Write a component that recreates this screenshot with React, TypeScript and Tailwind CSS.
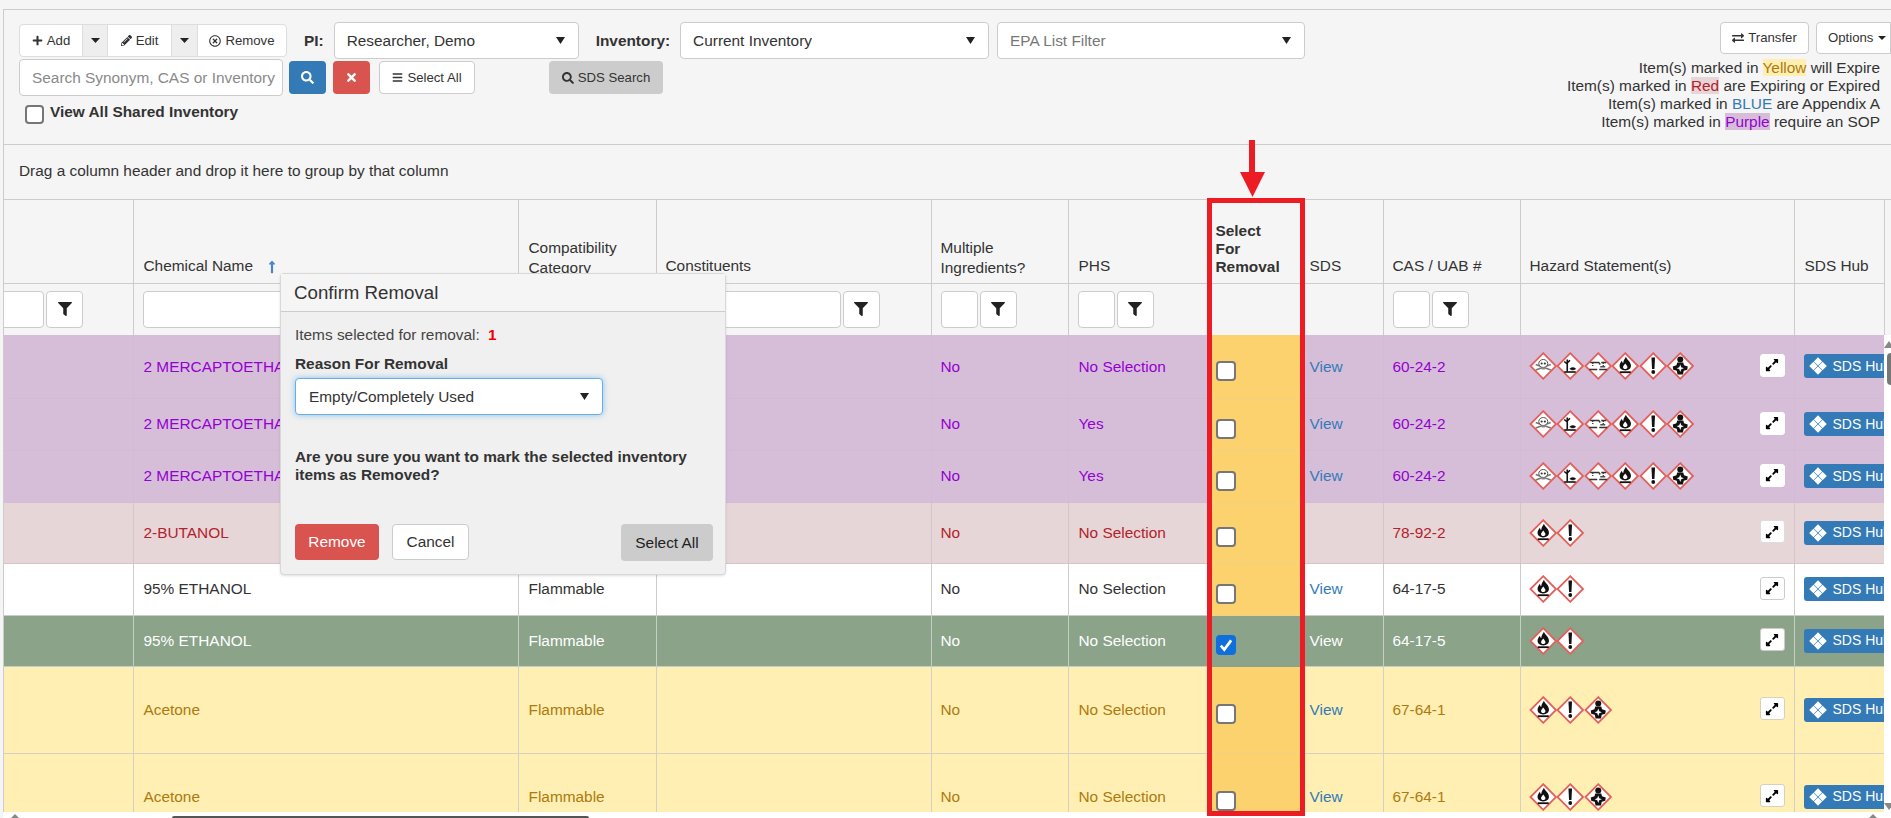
import { FaBars, FaExchangeAlt, FaExpandAlt, FaFilter, FaLongArrowAltUp, FaPencilAlt, FaPlus, FaRegTimesCircle, FaSearch, FaTimes } from "react-icons/fa";

type Ghs = "skull" | "env" | "corr" | "flame" | "excl" | "health";

interface RowData {
  h: string;
  name: string;
  compat: string;
  multi: string;
  phs: string;
  sds: boolean;
  cas: string;
  ghs: Ghs[];
  theme: "purple" | "red" | "white" | "green" | "yellow";
}

const allSix: Ghs[] = ["skull", "env", "corr", "flame", "excl", "health"];

const rows: RowData[] = [
  { h: "h-[63px]", name: "2 MERCAPTOETHANOL", compat: "", multi: "No", phs: "No Selection", sds: true, cas: "60-24-2", ghs: allSix, theme: "purple" },
  { h: "h-[52px]", name: "2 MERCAPTOETHANOL", compat: "", multi: "No", phs: "Yes", sds: true, cas: "60-24-2", ghs: allSix, theme: "purple" },
  { h: "h-[52px]", name: "2 MERCAPTOETHANOL", compat: "", multi: "No", phs: "Yes", sds: true, cas: "60-24-2", ghs: allSix, theme: "purple" },
  { h: "h-[61px]", name: "2-BUTANOL", compat: "", multi: "No", phs: "No Selection", sds: false, cas: "78-92-2", ghs: ["flame", "excl"], theme: "red" },
  { h: "h-[52px]", name: "95% ETHANOL", compat: "Flammable", multi: "No", phs: "No Selection", sds: true, cas: "64-17-5", ghs: ["flame", "excl"], theme: "white" },
  { h: "h-[51px]", name: "95% ETHANOL", compat: "Flammable", multi: "No", phs: "No Selection", sds: true, cas: "64-17-5", ghs: ["flame", "excl"], theme: "green" },
  { h: "h-[87px]", name: "Acetone", compat: "Flammable", multi: "No", phs: "No Selection", sds: true, cas: "67-64-1", ghs: ["flame", "excl", "health"], theme: "yellow" },
  { h: "h-[87px]", name: "Acetone", compat: "Flammable", multi: "No", phs: "No Selection", sds: true, cas: "67-64-1", ghs: ["flame", "excl", "health"], theme: "yellow" },
];

const themes = {
  purple: { row: "bg-[#d7bed8] text-[#9400d3]", cell: "border-[#d2bbd3]", sel: "bg-[#fbd26e] border-[#f0cf86]", link: "text-[#337ab7]", expand: "border-white" },
  red: { row: "bg-[#e7d6d7] text-[#b2222c]", cell: "border-[#d2c6c8]", sel: "bg-[#fbd26e] border-[#f0cf86]", link: "text-[#337ab7]", expand: "border-[#dddddd]" },
  white: { row: "bg-white text-[#333333]", cell: "border-[#cccccc]", sel: "bg-[#fbd26e] border-[#f0cf86]", link: "text-[#337ab7]", expand: "border-[#cccccc]" },
  green: { row: "bg-[#8aa389] text-white", cell: "border-[#c4cfc4]", sel: "bg-[#8aa389] border-[#8aa389]", link: "text-white", expand: "border-[#cccccc]" },
  yellow: { row: "bg-[#ffefb2] text-[#ad7a0f]", cell: "border-[#d4d0c4]", sel: "bg-[#fbd26e] border-[#f0cf86]", link: "text-[#337ab7]", expand: "border-[#d8d0b8]" },
};

function Caret({ className }: { className: string }) {
  return (
    <svg viewBox="0 0 10 8" preserveAspectRatio="none" className={className}>
      <path d="M0 0h10L5 8z" fill="#222222" />
    </svg>
  );
}

function SelectBox({ value, className, muted }: { value: string; className: string; muted?: boolean }) {
  return (
    <div className={`flex h-[37px] items-center justify-between rounded border border-[#cccccc] bg-white pr-[13px] pl-3 ${muted ? "text-[#777777]" : "text-[#333333]"} ${className}`}>
      <span>{value}</span>
      <Caret className="h-[7px] w-[9px]" />
    </div>
  );
}

function GhsIcon({ type }: { type: Ghs }) {
  return (
    <svg viewBox="0 0 28 28" className="-mr-px h-7 w-[28.5px] shrink-0">
      <polygon points="14,1.2 26.8,14 14,26.8 1.2,14" fill="#ffffff" stroke="#e2605b" strokeWidth="1.8" />
      {type === "skull" && (
        <g>
          <path d="M6.500 18l15-5.500M6.500 12.500l15 5.500" stroke="#777777" strokeWidth="1.500" />
          <ellipse cx="14" cy="11.500" rx="4.500" ry="4" fill="#ffffff" stroke="#555555" strokeWidth="1" />
          <circle cx="12.400" cy="11.500" r="1.100" fill="#333333" />
          <circle cx="15.600" cy="11.500" r="1.100" fill="#333333" />
          <path d="M12.300 15.200h3.400v2.300h-3.400z" fill="#888888" />
        </g>
      )}
      {type === "env" && (
        <g fill="none" stroke="#111111">
          <path d="M11 7.500v12M11 12l-3-2.500M11 11l2.700-2.700" strokeWidth="1.600" />
          <path d="M8 20h11.500" strokeWidth="1.600" />
          <path d="M13.500 16.800c2-1.600 4.200-1.600 6 0-1.800 1.600-4 1.600-6 0z" fill="#111111" strokeWidth="0.500" />
        </g>
      )}
      {type === "corr" && (
        <g fill="none" stroke="#333333" strokeWidth="1.300">
          <path d="M6 10.500h8.500l1.500 2M22 10.500h-5" />
          <path d="M8.500 11v3M19 11v3" strokeDasharray="1 1" />
          <path d="M5 17.500h8M15 17.500h8" strokeWidth="1.700" />
          <path d="M16 14.800h5" />
        </g>
      )}
      {type === "flame" && (
        <g fill="#111111">
          <path d="M14.700 4.800c.6 2.800 5 4.900 5 9 0 2.700-2.100 4.600-5.700 4.600s-5.700-1.900-5.700-4.600c0-2.300 1.300-3.700 2.400-5 .1 1.300.6 2 1.300 2.300.1-2.600 1.500-4.300 2.700-6.300z" />
          <path d="M14 11.500c-1.100 1.500-2.200 2.400-2.200 3.800 0 1.200 1 1.800 2.200 1.800s2.200-.6 2.200-1.800c0-1.400-1.200-2.300-2.200-3.800z" fill="#ffffff" />
          <rect x="8.500" y="19.300" width="11" height="1.800" />
        </g>
      )}
      {type === "excl" && (
        <g fill="#111111">
          <path d="M12.200 5.500h3.600l-.6 11.500h-2.400z" />
          <circle cx="14" cy="20" r="1.900" />
        </g>
      )}
      {type === "health" && (
        <g>
          <circle cx="14" cy="7.500" r="3" fill="#111111" />
          <path d="M11 10.500h6l.8 2.700 3.700 1.300-.5 3.300-3.500 1-.8 3.700h-5.400l-.8-3.700-3.500-1-.5-3.300 3.700-1.300z" fill="#111111" />
          <path d="M14 12.500l1 2.800 2.600 1-2.600 1-1 2.700-1-2.700-2.600-1 2.600-1z" fill="#ffffff" />
        </g>
      )}
    </svg>
  );
}

function SdsHub() {
  return (
    <button className="flex h-6 w-[90px] shrink-0 items-center rounded-[3px] bg-[#337ab7] pl-[5px] text-[14px] whitespace-nowrap text-white">
      <svg viewBox="0 0 16 16" className="mr-[6px] h-[18px] w-[18px] shrink-0" fill="#ffffff">
        <path d="M8 .2l3.700 3.700L8 7.600 4.300 3.900zM3.900 4.300L7.600 8l-3.700 3.700L.2 8zM12.100 4.300L15.800 8l-3.700 3.700L8.400 8zM8 8.400l3.700 3.700L8 15.800l-3.700-3.700z" />
      </svg>
      SDS Hub
    </button>
  );
}

function ColumnFilter({ inputWidth }: { inputWidth: string }) {
  return (
    <div className="flex h-[37px] gap-[2px]">
      <input className={`h-full rounded border border-[#cccccc] bg-white ${inputWidth}`} />
      <button className="flex h-full w-[37px] shrink-0 items-center justify-center rounded border border-[#cccccc] bg-white text-[#222222]">
        <FaFilter className="h-[14px] w-[14px]" />
      </button>
    </div>
  );
}

function TableRow({ row }: { row: RowData }) {
  const t = themes[row.theme];
  const cell = `border-r border-b px-[9px] align-middle ${t.cell}`;
  const wide = `border-r border-b pr-[9px] pl-[10px] align-middle ${t.cell}`;
  return (
    <tr className={`${row.h} ${t.row}`}>
      <td className={cell}></td>
      <td className={wide}>{row.name}</td>
      <td className={wide}>{row.compat}</td>
      <td className={cell}></td>
      <td className={cell}>{row.multi}</td>
      <td className={wide}>{row.phs}</td>
      <td className={`border-r border-b pl-[8px] align-middle ${t.sel}`}>
        <input
          type="checkbox"
          readOnly
          checked={row.theme === "green"}
          className="mt-[9px] block h-5 w-5 appearance-none rounded-[4px] border-2 border-[#767676] bg-white checked:hidden"
        />
        {row.theme === "green" && (
          <span className="mt-[9px] flex h-5 w-5 items-center justify-center rounded-[4px] bg-[#0f6fdc]">
            <svg viewBox="0 0 14 14" className="h-4 w-4" fill="none" stroke="#ffffff" strokeWidth="2.400">
              <path d="M2.500 7.500l3 3.500 6-8" />
            </svg>
          </span>
        )}
      </td>
      <td className={cell}>{row.sds && <a className={t.link}>View</a>}</td>
      <td className={cell}>{row.cas}</td>
      <td className={cell}>
        <div className="-ml-px flex items-center justify-between">
          <div className="flex">
            {row.ghs.map((g, i) => (
              <GhsIcon key={i} type={g} />
            ))}
          </div>
          <button className={`-mt-0.5 flex h-[23px] w-[25px] items-center justify-center rounded-[3px] border bg-white text-black ${t.expand}`}>
            <FaExpandAlt className="h-[14px] w-[14px]" />
          </button>
        </div>
      </td>
      <td className={`${cell} overflow-hidden`}>
        <SdsHub />
      </td>
    </tr>
  );
}

export default function App() {
  const thBase = "border-r border-b border-[#cccccc] text-left align-bottom text-[#333333]";
  const th = `${thBase} px-[9px] pb-[5px] font-normal`;
  const thWide = `${thBase} pr-[9px] pb-[5px] pl-[10px] font-normal`;
  const filter = "border-r border-[#cccccc] border-b-0 px-[9px] align-middle";
  return (
    <div className="relative h-[818px] w-[1891px] overflow-hidden bg-[#f5f5f5] font-['Liberation_Sans',Arial,sans-serif] text-[15.4px] text-[#333333]">
      <div className="flex h-full flex-col pt-[9px] pl-[3px]">
        <div className="flex h-full flex-col border-t border-l border-[#cccccc]">
          {/* Toolbar */}
          <div className="flex h-[135px] shrink-0 justify-between border-b border-[#cccccc] pt-3 pl-[15px]">
            <div className="flex flex-col">
              <div className="flex items-start">
                <div className="mt-[2px] flex h-[33px] w-[268px] overflow-hidden rounded-sm border border-[#dddddd] bg-white text-[13.2px]">
                  <button className="flex w-[62px] items-center justify-center gap-1">
                    <FaPlus className="h-[11px] w-[11px]" /> Add
                  </button>
                  <button className="flex w-[26px] items-center justify-center border-x border-[#dddddd] bg-[#eeeeee]">
                    <Caret className="h-[5px] w-[9px]" />
                  </button>
                  <button className="flex w-[63px] items-center justify-center gap-1">
                    <FaPencilAlt className="h-[11px] w-[11px]" /> Edit
                  </button>
                  <button className="flex w-[27px] items-center justify-center border-x border-[#dddddd] bg-[#eeeeee]">
                    <Caret className="h-[5px] w-[9px]" />
                  </button>
                  <button className="flex flex-1 items-center justify-center gap-1">
                    <FaRegTimesCircle className="h-3 w-3" /> Remove
                  </button>
                </div>
                <b className="mt-[7px] ml-[17px]">PI:</b>
                <SelectBox value="Researcher, Demo" className="ml-[10px] w-[245px]" />
                <b className="mt-[7px] ml-[17px]">Inventory:</b>
                <SelectBox value="Current Inventory" className="ml-[10px] w-[309px]" />
                <SelectBox value="EPA List Filter" muted className="ml-[8px] w-[308px]" />
              </div>
              <div className="flex items-center">
                <input
                  placeholder="Search Synonym, CAS or Inventory"
                  className="h-[37px] w-[264px] rounded border border-[#cccccc] bg-white pl-[12px] placeholder:text-[#8a8a8a]"
                />
                <button className="ml-[6px] flex h-[33px] w-[37px] items-center justify-center rounded-sm bg-[#337ab7] text-white">
                  <FaSearch className="h-[13px] w-[13px]" />
                </button>
                <button className="ml-[7px] flex h-[33px] w-[37px] items-center justify-center rounded-sm bg-[#d9534f] text-white">
                  <FaTimes className="h-[13px] w-[13px]" />
                </button>
                <button className="ml-[9px] flex h-[33px] w-[96px] items-center justify-center gap-1 rounded-sm border border-[#cccccc] bg-white text-[13.2px]">
                  <FaBars className="h-[11px] w-[11px]" /> Select All
                </button>
                <button className="ml-[74px] flex h-[33px] w-[114px] items-center justify-center gap-1 rounded-sm bg-[#cccccc] text-[13.2px]">
                  <FaSearch className="h-3 w-3" /> SDS Search
                </button>
              </div>
              <div className="mt-[8px] ml-[6px] flex items-start">
                <span className="mt-px h-[19px] w-[19px] rounded-[4px] border-2 border-[#767676] bg-white" />
                <b className="ml-[6px] leading-[16px]">View All Shared Inventory</b>
              </div>
            </div>
            <div className="flex flex-col items-end">
              <div className="flex gap-[7px]">
                <button className="flex h-[32px] w-[89px] items-center justify-center gap-1 rounded-sm border border-[#cccccc] bg-white text-[13.2px]">
                  <FaExchangeAlt className="h-3 w-3" /> Transfer
                </button>
                <button className="flex h-[32px] w-[75px] items-center gap-[5px] rounded-l-sm border border-[#cccccc] bg-white pl-[11px] text-[13.2px]">
                  Options <Caret className="h-1 w-2" />
                </button>
              </div>
              <div className="mt-[5px] pr-[11px] text-right leading-[18px]">
                <div>
                  Item(s) marked in <span className="bg-[#ffefb2] text-[#ad7a0f]">Yellow</span> will Expire
                </div>
                <div>
                  Item(s) marked in <span className="bg-[#e7d6d7] text-[#b2222c]">Red</span> are Expiring or Expired
                </div>
                <div>
                  Item(s) marked in <span className="text-[#337ab7]">BLUE</span> are Appendix A
                </div>
                <div>
                  Item(s) marked in <span className="bg-[#d7bed8] text-[#9400d3]">Purple</span> require an SOP
                </div>
              </div>
            </div>
          </div>

          {/* Group drop area */}
          <div className="flex h-[55px] shrink-0 items-center border-b border-[#cccccc] pb-[3px] pl-[15px]">
            Drag a column header and drop it here to group by that column
          </div>

          {/* Grid */}
          <div className="min-h-0 flex-1 overflow-hidden">
            <table className="w-[1880px] table-fixed border-collapse">
              <colgroup>
                <col className="w-[129px]" />
                <col className="w-[385px]" />
                <col className="w-[138px]" />
                <col className="w-[275px]" />
                <col className="w-[137px]" />
                <col className="w-[139px]" />
                <col className="w-[93px]" />
                <col className="w-[83px]" />
                <col className="w-[137px]" />
                <col className="w-[274px]" />
                <col className="w-[90px]" />
              </colgroup>
              <thead>
                <tr className="h-[83px]">
                  <th className={th}></th>
                  <th className={thWide}>
                    Chemical Name <FaLongArrowAltUp className="ml-2 inline h-[14px] w-[14px] text-[#4a86c8]" />
                  </th>
                  <th className={`${thWide} leading-[20px]`}>Compatibility Category</th>
                  <th className={th}>Constituents</th>
                  <th className={`${th} leading-[20px]`}>Multiple Ingredients?</th>
                  <th className={thWide}>PHS</th>
                  <th className={`${thBase} pb-[7px] pl-[8px] leading-[18px] font-bold`}>
                    Select
                    <br />
                    For
                    <br />
                    Removal
                  </th>
                  <th className={th}>SDS</th>
                  <th className={th}>CAS / UAB #</th>
                  <th className={th}>Hazard Statement(s)</th>
                  <th className={thWide}>SDS Hub</th>
                </tr>
                <tr className="h-[52px]">
                  <td className={`${filter} overflow-hidden !px-0`}>
                    <div className="-ml-[9px] w-[88px]">
                      <ColumnFilter inputWidth="w-[49px]" />
                    </div>
                  </td>
                  <td className={filter}>
                    <ColumnFilter inputWidth="flex-1" />
                  </td>
                  <td className={filter}></td>
                  <td className={filter}>
                    <div className="-ml-[20px]">
                      <ColumnFilter inputWidth="w-[195px]" />
                    </div>
                  </td>
                  <td className={filter}>
                    <ColumnFilter inputWidth="w-[37px]" />
                  </td>
                  <td className={filter}>
                    <ColumnFilter inputWidth="w-[37px]" />
                  </td>
                  <td className={filter}></td>
                  <td className={filter}></td>
                  <td className={filter}>
                    <ColumnFilter inputWidth="w-[37px]" />
                  </td>
                  <td className={filter}></td>
                  <td className={filter}></td>
                </tr>
              </thead>
              <tbody>
                {rows.map((row, i) => (
                  <TableRow key={i} row={row} />
                ))}
              </tbody>
            </table>
          </div>
        </div>
      </div>

      {/* Scrollbars */}
      <div className="absolute top-[335px] right-0 flex h-[477px] w-[7px] flex-col overflow-hidden bg-white">
        <svg viewBox="0 0 10 7" className="mt-[6px] w-[10px] shrink-0">
          <path d="M5 0l5 7H0z" fill="#888888" />
        </svg>
        <div className="mt-[5px] h-8 w-1 shrink-0 self-end rounded-l-sm bg-[#777777]" />
        <svg viewBox="0 0 10 7" className="mt-auto mb-[2px] w-[10px] shrink-0">
          <path d="M0 0h10L5 7z" fill="#888888" />
        </svg>
      </div>
      <div className="absolute right-0 bottom-0 left-[3px] flex h-[6px] items-end justify-between bg-white pr-[14px] pl-[8px]">
        <svg viewBox="0 0 8 4" className="h-1 w-2">
          <path d="M4 0l4 4H0z" fill="#888888" />
        </svg>
        <svg viewBox="0 0 8 4" className="h-1 w-2">
          <path d="M4 0l4 4H0z" fill="#888888" />
        </svg>
      </div>
      <div className="absolute bottom-0 left-[172px] h-[2px] w-[417px] rounded-t-sm bg-[#555555]" />

      {/* Callout */}
      <div className="absolute top-[140px] left-[1249px] h-[33px] w-[6px] bg-[#ed1c24]" />
      <svg viewBox="0 0 25 25" className="absolute top-[172px] left-[1240px] h-[25px] w-[25px]">
        <path d="M0 0h25L12.500 25z" fill="#ed1c24" />
      </svg>
      <div className="pointer-events-none absolute top-[198px] left-[1207px] h-[618px] w-[98px] border-[5px] border-[#ed1c24]" />

      {/* Modal */}
      <div className="absolute top-[273px] left-[280px] flex h-[302px] w-[446px] flex-col rounded border border-[#d8d8d8] bg-[#f0f0f0] shadow-sm">
        <div className="flex h-[38px] shrink-0 items-center border-b border-[#cccccc] bg-[#f5f5f5] pt-[2px] pl-[13px] text-[18.7px]">
          Confirm Removal
        </div>
        <div className="flex flex-1 flex-col pr-[12px] pl-[14px]">
          <div className="mt-[14px] leading-[18px] text-[#444444]">
            Items selected for removal: <b className="ml-1 text-[#ee0000]">1</b>
          </div>
          <b className="mt-[11px] leading-[18px]">Reason For Removal</b>
          <div className="mt-[5px] flex h-[37px] w-[308px] items-center justify-between rounded border border-[#66afe9] bg-white pr-[13px] pl-[13px] shadow-[0_0_6px_rgba(102,175,233,0.7)]">
            <span>Empty/Completely Used</span>
            <Caret className="h-[7px] w-[9px]" />
          </div>
          <b className="mt-[33px] leading-[18px]">
            Are you sure you want to mark the selected inventory
            <br />
            items as Removed?
          </b>
          <div className="mt-auto mb-[13px] flex">
            <button className="h-[36px] w-[84px] rounded-sm bg-[#d9534f] text-white">Remove</button>
            <button className="ml-[13px] h-[36px] w-[77px] rounded-sm border border-[#cccccc] bg-white">Cancel</button>
            <button className="ml-auto h-[37px] w-[92px] rounded-sm bg-[#cccccc] text-[#222222]">Select All</button>
          </div>
        </div>
      </div>
    </div>
  );
}
